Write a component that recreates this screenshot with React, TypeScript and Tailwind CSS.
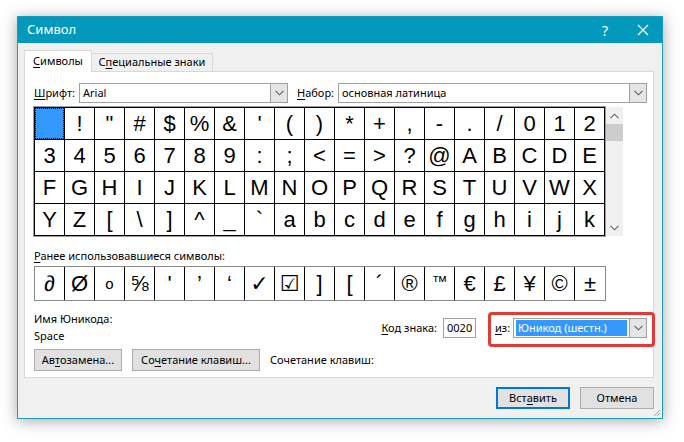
import React from "react";

const row1 = [" ", "!", '"', "#", "$", "%", "&", "'", "(", ")", "*", "+", ",", "-", ".", "/", "0", "1", "2"];
const rows = [row1, "3456789:;<=>?@ABCDE".split(""), "FGHIJKLMNOPQRSTUVWX".split(""), "YZ[\\]^_`abcdefghijk".split("")];
const recent = ["∂", "Ø", "o", "⅝", "'", "’", "‘", "✓", "☑", "]", "[", "´", "®", "™", "€", "£", "¥", "©", "±"];

function U({ children }: { children: React.ReactNode }) {
  return <span className="underline underline-offset-2 decoration-1">{children}</span>;
}

function Chevron({ up = false }: { up?: boolean }) {
  return (
    <svg width="9" height="6" viewBox="0 0 9 6" className={up ? "rotate-180" : ""}>
      <path d="M0.5 0.8 L4.5 4.8 L8.5 0.8" fill="none" stroke="#606060" strokeWidth="1.1" />
    </svg>
  );
}

function Combo({ width, value, selected = false }: { width: string; value: string; selected?: boolean }) {
  return (
    <div className={`flex h-[20px] ${width} border border-[#a0a0a0] bg-white`}>
      <div className="flex flex-1 items-center px-[2px]">
        <span className={selected ? "bg-[#3399ff] px-[2px] text-white leading-[16px] w-full" : "px-[1px]"}>{value}</span>
      </div>
      <div className="flex w-[17px] items-center justify-center border-l border-[#a0a0a0] bg-[#e5e5e5]">
        <Chevron />
      </div>
    </div>
  );
}

function Btn({ children, w, primary = false }: { children: React.ReactNode; w: string; primary?: boolean }) {
  return (
    <div
      className={`flex h-[22px] ${w} items-center justify-center bg-[#e1e1e1] ${
        primary ? "border-2 border-[#0078d7]" : "border border-[#adadad]"
      }`}
    >
      {children}
    </div>
  );
}

export default function App() {
  return (
    <div className="h-[442px] w-[684px] overflow-hidden bg-white pl-[17px] pt-[16px] font-['Noto_Sans',sans-serif] text-[11px] text-black">
      <div className="flex h-[403px] w-[646px] flex-col border border-[#1a9dbd] bg-[#f0f0f0] shadow-[0_2px_14px_rgba(0,0,0,0.35)]">
        {/* title bar */}
        <div className="flex h-[27px] items-center bg-[#0399bc] pl-[9px] text-white">
          <span className="text-[13px]">Символ</span>
          <span className="ml-auto mr-[29px] text-[14px]">?</span>
          <svg width="12" height="12" viewBox="0 0 12 12" className="mr-[13px]">
            <path d="M1 1 L11 11 M11 1 L1 11" stroke="white" strokeWidth="1.2" />
          </svg>
        </div>

        <div className="flex flex-1 flex-col pl-[6px] pr-[8px]">
          {/* tabs */}
          <div className="mt-[7px] flex h-[21px] items-end">
            <div className="relative z-10 -mb-px flex h-[22px] w-[68px] items-center justify-center border border-b-0 border-[#d9d9d9] bg-white">
              <span><U>С</U>имволы</span>
            </div>
            <div className="flex h-[18px] w-[121px] items-center justify-center border border-b-0 border-l-0 border-[#d9d9d9] bg-[#f0f0f0]">
              <span>С<U>п</U>ециальные знаки</span>
            </div>
          </div>

          {/* panel */}
          <div className="flex h-[307px] flex-col border border-[#d9d9d9] bg-white pl-[9px] pr-[6px]">
            {/* font row */}
            <div className="mt-[11px] flex items-center">
              <span className="w-[45px]"><U>Ш</U>рифт:</span>
              <Combo width="w-[209px]" value="Arial" />
              <span className="ml-[9px] w-[41px]"><U>Н</U>абор:</span>
              <Combo width="w-[309px]" value="основная латиница" />
            </div>

            {/* character grid */}
            <div className="mt-[4px] flex">
              <div className="border-l border-t border-black font-['Liberation_Sans',Arial,sans-serif] text-[22px] leading-none shadow-[0_0_0_1px_#a0a0a0]">
                {rows.map((r, ri) => (
                  <div key={ri} className="flex">
                    {r.map((c, ci) => (
                      <div key={ci} className="flex h-[32px] w-[30px] items-center justify-center border-b border-r border-black">
                        {ri === 0 && ci === 0 ? (
                          <div className="h-full w-full border border-dotted border-black bg-[#3399ff]" />
                        ) : (
                          c
                        )}
                      </div>
                    ))}
                  </div>
                ))}
              </div>
              <div className="ml-px flex w-[17px] flex-col items-center bg-[#f0f0f0]">
                <div className="flex h-[17px] items-center justify-center">
                  <Chevron up />
                </div>
                <div className="h-[17px] w-full bg-[#cdcdcd]" />
                <div className="mt-auto flex h-[17px] items-center justify-center">
                  <Chevron />
                </div>
              </div>
            </div>

            {/* recently used */}
            <div className="mt-[12px] leading-[16px]"><U>Р</U>анее использовавшиеся символы:</div>
            <div className="mt-[2px] flex w-[572px] border border-[#8a8a8a] font-['Liberation_Sans','DejaVu_Sans',sans-serif] text-[22px] leading-none">
              {recent.map((c, i) => (
                <div
                  key={i}
                  className={`flex h-[33px] w-[30px] justify-center ${i === 13 ? "items-start pt-[7px] text-[16px]" : "items-center"} ${
                    i < recent.length - 1 ? "border-r border-black" : ""
                  } ${i === 2 ? "text-[15px]" : ""}`}
                >
                  {c}
                </div>
              ))}
            </div>

            {/* unicode name + code */}
            <div className="mt-[9px] flex">
              <div className="flex flex-col leading-[17px]">
                <span>Имя Юникода:</span>
                <span>Space</span>
              </div>
              <div className="ml-auto mt-[8px] flex h-[20px] items-center">
                <span className="mr-[6px]"><U>К</U>од знака:</span>
                <div className="flex h-[20px] w-[33px] items-center border border-[#a0a0a0] px-[3px]">0020</div>
                <div className="relative ml-[19px] flex items-center">
                  <div className="pointer-events-none absolute -bottom-[9px] -left-[7px] -right-[8px] -top-[6px] rounded-[4px] border-[3px] border-[#e53935]" />
                  <span className="mr-[3px] w-[15px]"><U>и</U>з:</span>
                  <Combo width="w-[134px]" value="Юникод (шестн.)" selected />
                </div>
              </div>
            </div>

            {/* buttons */}
            <div className="mt-[5px] flex items-center">
              <Btn w="w-[88px]">
                <span>Ав<U>т</U>озамена...</span>
              </Btn>
              <div className="ml-[10px]">
                <Btn w="w-[128px]">
                  <span>Со<U>ч</U>етание клавиш...</span>
                </Btn>
              </div>
              <span className="ml-[10px]">Сочетание клавиш:</span>
            </div>
          </div>

          {/* footer */}
          <div className="mt-[9px] flex justify-end gap-[10px]">
            <Btn w="w-[74px]" primary>
              <span>Вст<U>а</U>вить</span>
            </Btn>
            <Btn w="w-[74px]">Отмена</Btn>
          </div>
          <div className="mt-auto -mr-[7px] flex justify-end pb-[1px]">
            <svg width="8" height="8" viewBox="0 0 8 8">
              <path d="M7 1 L1 7 M7 4 L4 7" stroke="#a0a0a0" strokeWidth="1" />
            </svg>
          </div>
        </div>
      </div>
    </div>
  );
}
